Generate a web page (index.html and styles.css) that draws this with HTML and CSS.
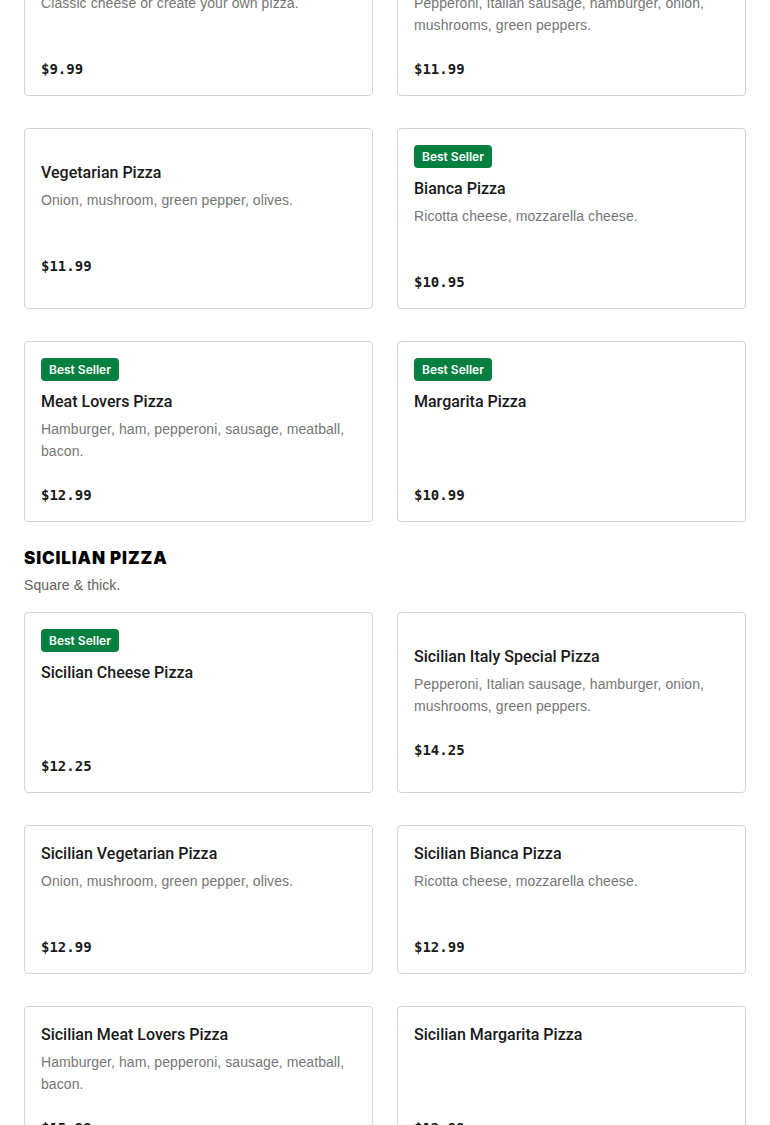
FILE: index.html
```html
<!DOCTYPE html>
<html lang="en">
<head>
<meta charset="utf-8">
<title>Menu</title>
<link rel="stylesheet" href="styles.css">
</head>
<body>
<main class="menu">
  <section class="section">
    <div class="grid">
      <article class="card">
        <h3 class="name">Cheese Pizza</h3>
        <p class="desc">Classic cheese or create your own pizza.</p>
        <p class="price">$9.99</p>
      </article>
      <article class="card">
        <h3 class="name">Italy Special Pizza</h3>
        <p class="desc">Pepperoni, Italian sausage, hamburger, onion, mushrooms, green peppers.</p>
        <p class="price">$11.99</p>
      </article>
      <article class="card">
        <h3 class="name">Vegetarian Pizza</h3>
        <p class="desc">Onion, mushroom, green pepper, olives.</p>
        <p class="price">$11.99</p>
      </article>
      <article class="card">
        <span class="badge">Best Seller</span>
        <h3 class="name">Bianca Pizza</h3>
        <p class="desc">Ricotta cheese, mozzarella cheese.</p>
        <p class="price">$10.95</p>
      </article>
      <article class="card">
        <span class="badge">Best Seller</span>
        <h3 class="name">Meat Lovers Pizza</h3>
        <p class="desc">Hamburger, ham, pepperoni, sausage, meatball, bacon.</p>
        <p class="price">$12.99</p>
      </article>
      <article class="card">
        <span class="badge">Best Seller</span>
        <h3 class="name">Margarita Pizza</h3>
        <p class="desc"></p>
        <p class="price">$10.99</p>
      </article>
    </div>
  </section>
  <section class="section">
    <header class="section-head">
      <h2 class="section-title">SICILIAN PIZZA</h2>
      <p class="section-sub">Square &amp; thick.</p>
    </header>
    <div class="grid">
      <article class="card">
        <span class="badge">Best Seller</span>
        <h3 class="name">Sicilian Cheese Pizza</h3>
        <p class="desc"></p>
        <p class="price">$12.25</p>
      </article>
      <article class="card">
        <h3 class="name">Sicilian Italy Special Pizza</h3>
        <p class="desc">Pepperoni, Italian sausage, hamburger, onion, mushrooms, green peppers.</p>
        <p class="price">$14.25</p>
      </article>
      <article class="card">
        <h3 class="name">Sicilian Vegetarian Pizza</h3>
        <p class="desc">Onion, mushroom, green pepper, olives.</p>
        <p class="price">$12.99</p>
      </article>
      <article class="card">
        <h3 class="name">Sicilian Bianca Pizza</h3>
        <p class="desc">Ricotta cheese, mozzarella cheese.</p>
        <p class="price">$12.99</p>
      </article>
      <article class="card">
        <h3 class="name">Sicilian Meat Lovers Pizza</h3>
        <p class="desc">Hamburger, ham, pepperoni, sausage, meatball, bacon.</p>
        <p class="price">$15.99</p>
      </article>
      <article class="card">
        <h3 class="name">Sicilian Margarita Pizza</h3>
        <p class="desc"></p>
        <p class="price">$12.99</p>
      </article>
    </div>
  </section>
</main>
</body>
</html>
```
FILE: styles.css
```css
* { box-sizing: border-box; }
html, body { margin: 0; padding: 0; background: #ffffff; }
body {
  font-family: "Liberation Sans", Arial, sans-serif;
  color: #191919;
}
.menu {
  padding: 0 24px;
  margin-top: -53px;
}
.grid {
  display: grid;
  grid-template-columns: 1fr 1fr;
  column-gap: 24px;
  row-gap: 32px;
}
.card {
  border: 1px solid #d3d3d3;
  border-radius: 4px;
  padding: 17px 16px 15px;
  display: flex;
  flex-direction: column;
  justify-content: center;
  align-items: flex-start;
  min-height: 149px;
}
.badge {
  display: inline-block;
  height: 23px;
  line-height: 23px;
  padding: 0 8px;
  margin: -1px 0 10px;
  background: #03803f;
  color: #ffffff;
  border-radius: 4px;
  font-family: Inter, "Liberation Sans", sans-serif;
  font-size: 12px;
  font-weight: 600;
}
.name {
  margin: 0;
  font-family: Roboto, "Liberation Sans", sans-serif;
  font-size: 16px;
  line-height: 22px;
  font-weight: 500;
  color: #191919;
}
.desc {
  margin: 5px 0 0;
  min-height: 44px;
  font-size: 14px;
  line-height: 22px;
  letter-spacing: 0.08px;
  color: #767676;
}
.price {
  margin: 22px 0 0;
  font-family: "DejaVu Sans Mono", "Liberation Mono", monospace;
  font-weight: 700;
  font-size: 14px;
  line-height: 22px;
  color: #191919;
}
.section-head {
  padding: 24px 0 17px;
}
.section-title {
  margin: 0;
  font-family: Inter, "Liberation Sans", sans-serif;
  font-size: 17px;
  line-height: 24px;
  font-weight: 900;
  letter-spacing: 0.85px;
  color: #000000;
}
.section-sub {
  margin: 5px 0 0;
  font-size: 14px;
  line-height: 20px;
  letter-spacing: 0.1px;
  color: #606060;
}
```
